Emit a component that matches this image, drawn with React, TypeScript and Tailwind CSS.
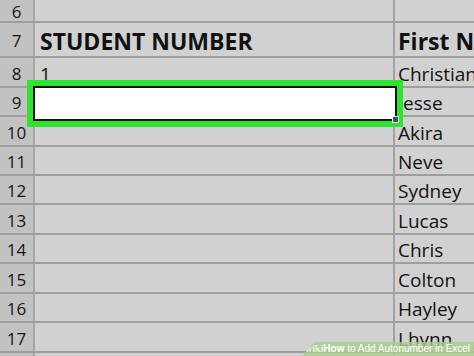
import React from "react";

type Row = { n: number; h: string; a?: string; b?: string; head?: boolean };

const rows: Row[] = [
  { n: 6, h: "h-[23px]" },
  { n: 7, h: "h-[35px]", a: "STUDENT NUMBER", b: "First Name", head: true },
  { n: 8, h: "h-[30px]", a: "1", b: "Christian" },
  { n: 9, h: "h-[29px]", b: "Jesse" },
  { n: 10, h: "h-[30px]", b: "Akira" },
  { n: 11, h: "h-[29px]", b: "Neve" },
  { n: 12, h: "h-[29px]", b: "Sydney" },
  { n: 13, h: "h-[30px]", b: "Lucas" },
  { n: 14, h: "h-[29px]", b: "Chris" },
  { n: 15, h: "h-[30px]", b: "Colton" },
  { n: 16, h: "h-[29px]", b: "Hayley" },
  { n: 17, h: "h-[30px]", b: "Lhynn" },
  { n: 18, h: "h-[30px]" },
];

function SheetRow({ row }: { row: Row }) {
  const text = row.head
    ? "text-[23px] font-bold leading-none pt-[3px]"
    : "text-[19px] leading-none pt-[4px]";
  return (
    <div className={`flex shrink-0 border-b-2 border-[#9e9e9e] ${row.h}`}>
      <div className="w-[35px] shrink-0 flex items-center justify-center bg-[#c2c2c2] border-r-2 border-[#a6a6a6] text-[17px] leading-none pt-[2px] text-[#151515]">
        {row.n}
      </div>
      <div className={`w-[360px] shrink-0 flex items-center pl-[5px] border-r-2 border-[#a2a2a2] text-[#111] whitespace-nowrap ${text}`}>
        {row.a}
      </div>
      <div className={`flex-1 flex items-center pl-[3px] text-[#111] whitespace-nowrap overflow-hidden ${text}`}>
        {row.b}
      </div>
    </div>
  );
}

export default function App() {
  return (
    <div className="relative w-[474px] h-[356px] overflow-hidden bg-[#d1d1d1] font-['Open_Sans',sans-serif] flex flex-col">
      {rows.map((r) => (
        <SheetRow key={r.n} row={r} />
      ))}

      {/* selected cell + highlight */}
      <div className="absolute left-[27px] top-[80px] w-[376px] h-[47px] border-[6px] border-[#2fe42f]">
        <div className="relative w-full h-full border-2 border-[#111] bg-white">
          <div className="absolute right-[-4px] bottom-[-4px] w-[7px] h-[7px] bg-[#1d6b3a] border border-white" />
        </div>
      </div>

      {/* watermark */}
      <div className="absolute right-0 bottom-0 w-[172px] h-[14px] bg-[#a8cc8c]/80 [clip-path:polygon(12px_0,100%_0,100%_100%,0_100%)] flex items-center pl-[3px] text-[10px] leading-none font-bold text-white font-['Liberation_Sans',sans-serif] whitespace-nowrap">
        <span className="font-['Liberation_Serif',serif] text-[#e6f0de]">wiki</span>
        <span>How</span>
        <span className="font-normal">&nbsp;to Add Autonumber in Excel</span>
      </div>
    </div>
  );
}
